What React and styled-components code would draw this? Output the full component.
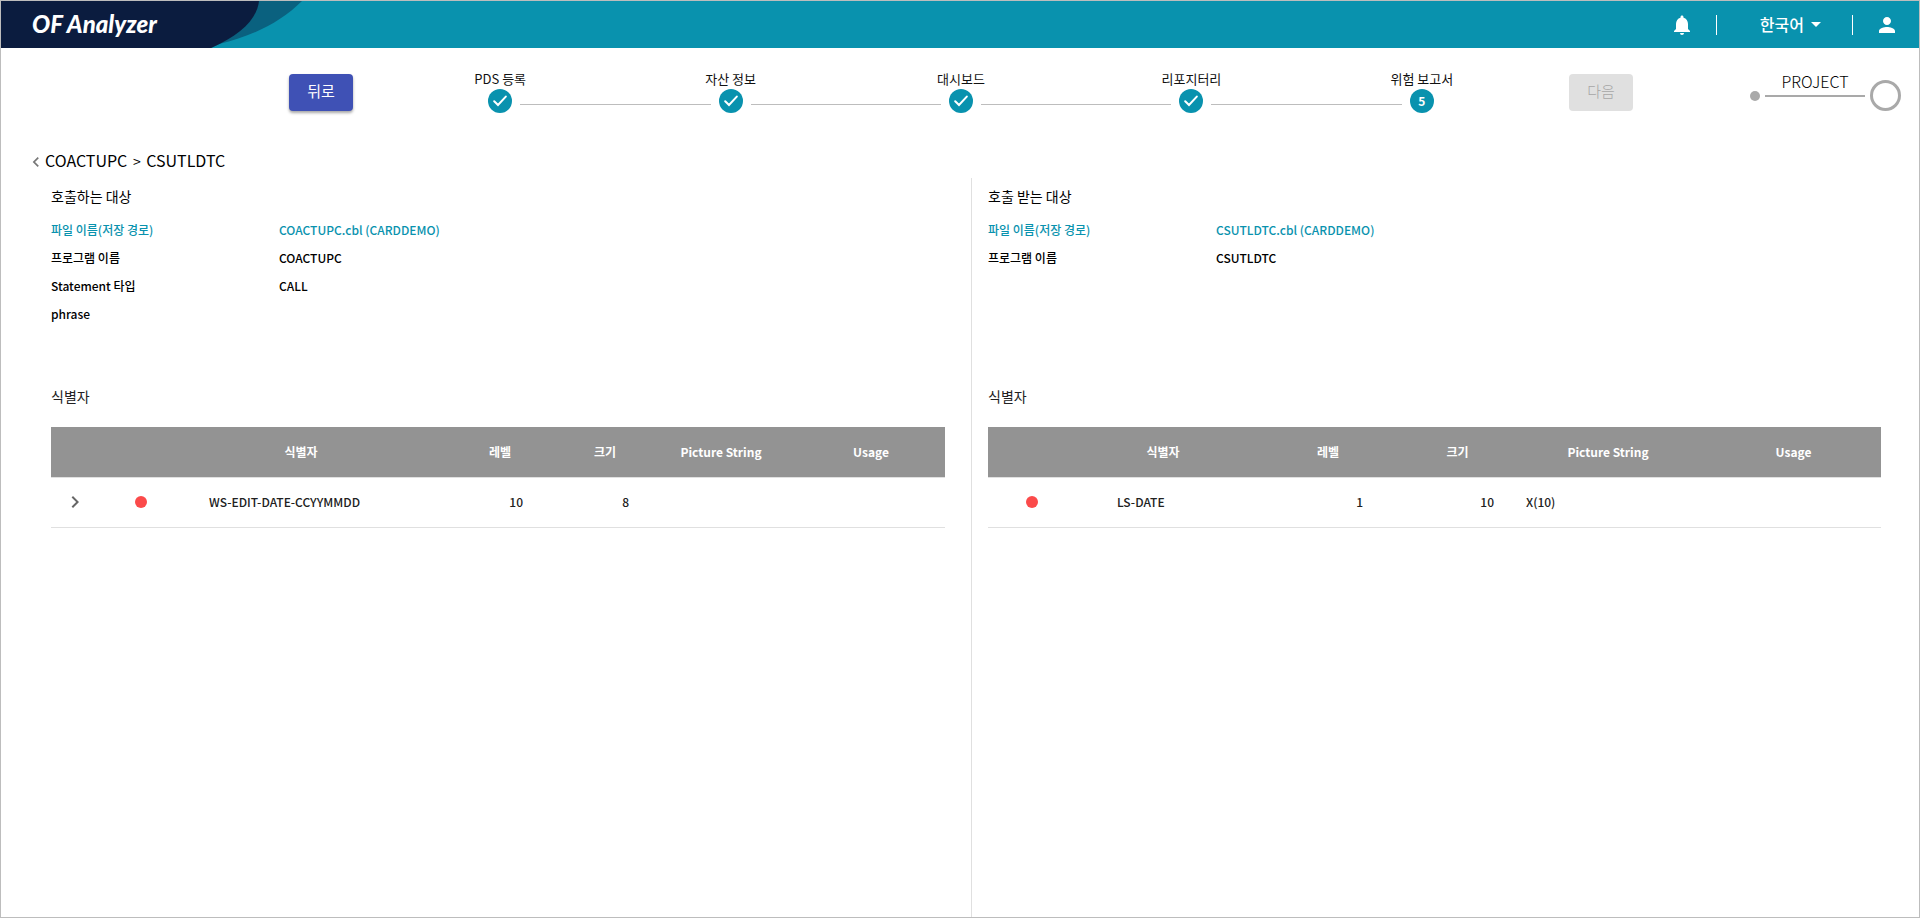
import React from 'react'
import styled, { createGlobalStyle } from 'styled-components'
import {
  MdNotifications,
  MdPerson,
  MdArrowDropDown,
  MdKeyboardArrowLeft,
  MdKeyboardArrowRight,
} from 'react-icons/md'

const colors = {
  teal: '#0992ae',
  tealDark: '#0a617f',
  navy: '#0b1c3f',
  indigo: '#3f51b5',
  line: '#bdbdbd',
  divider: '#e0e0e0',
  head: '#939393',
  gray: '#a9a9a9',
  red: '#fb4a4a',
}

const GlobalStyle = createGlobalStyle`
  * {
    box-sizing: border-box;
  }

  body {
    margin: 0;
    color: #000;
    background: #fff;
    font-family: 'Noto Sans CJK KR', 'Noto Sans', sans-serif;
    font-size: 12px;
    line-height: 18px;
  }

  button {
    font-family: inherit;
  }
`

const Page = styled.div`
  display: flex;
  flex-direction: column;
  min-height: 100vh;
  border: 1px solid ${colors.line};
`

const Header = styled.header`
  display: flex;
  justify-content: space-between;
  height: 47px;
  background: ${colors.teal};
  color: #fff;
`

const Brand = styled.a`
  display: grid;
  align-items: center;
  color: #fff;
  text-decoration: none;

  > * {
    grid-area: 1 / 1;
  }
`

const BrandName = styled.span`
  padding-left: 31px;
  padding-bottom: 2px;
  font-family: Lato, sans-serif;
  font-size: 24px;
  font-style: italic;
  font-weight: 900;
  line-height: 30px;
`

const Tools = styled.div`
  display: flex;
  align-items: center;
  padding-right: 20px;
`

const IconButton = styled.button`
  display: flex;
  padding: 0;
  border: 0;
  background: none;
  color: ${props => props.$color || 'inherit'};
`

const Rule = styled.span`
  width: 1px;
  height: 20px;
  background: #fff;
`

const Language = styled.button`
  display: flex;
  align-items: center;
  padding: 0 24px 2px 43px;
  border: 0;
  background: none;
  color: #fff;
  font-size: 16px;
  font-weight: 500;
  line-height: 24px;
`

const Bell = styled(IconButton)`
  margin-right: 22px;
`

const User = styled(IconButton)`
  margin-left: 22px;
`

const TopBar = styled.nav`
  display: grid;
  grid-template-columns: 384fr 1152fr 382fr;
  align-items: start;
  padding-top: 22px;
  height: 100px;
`

const Side = styled.div`
  display: flex;
  align-items: flex-start;
  justify-content: ${props => (props.$end ? 'flex-end' : 'space-between')};
  padding: ${props => (props.$end ? '4px 32px 0 0' : '4px 18px 0 32px')};
`

const NavButton = styled.button`
  width: 64px;
  height: 37px;
  padding: 0 0 4px;
  border: 0;
  border-radius: 4px;
  background: ${colors.indigo};
  color: #fff;
  font-size: 15px;
  font-weight: 400;
  box-shadow: 0 2px 3px rgba(0, 0, 0, 0.35);

  &:disabled {
    background: #e0e0e0;
    color: #a6a6a6;
    font-weight: 300;
    box-shadow: none;
  }
`

const Steps = styled.ol`
  display: flex;
  margin: 0;
  padding: 0;
  list-style: none;
`

const Step = styled.li`
  flex: 1;
  display: grid;
  grid-template-columns: 1fr 24px 1fr;
  column-gap: 8px;
  justify-items: center;
`

const StepLabel = styled.span`
  grid-column: 1 / -1;
  padding-bottom: 1px;
  color: #111;
  font-size: 13px;
`

const StepMark = styled.span`
  grid-column: 2;
  display: flex;
  align-items: center;
  justify-content: center;
  width: 24px;
  height: 24px;
  border-radius: 50%;
  background: ${colors.teal};
  color: #fff;
  font-weight: 700;
`

const StepLine = styled.span`
  grid-column: ${props => (props.$before ? 1 : 3)};
  grid-row: 2;
  width: 100%;
  height: 1px;
  margin-top: 15px;
  background: ${colors.line};
`

const Project = styled.div`
  display: flex;
  align-items: center;
  gap: 5px;
  height: 37px;
  margin-top: 3px;
`

const ProjectDot = styled.span`
  width: 10px;
  height: 10px;
  border-radius: 50%;
  background: ${colors.gray};
`

const ProjectName = styled.span`
  align-self: start;
  width: 100px;
  height: 20px;
  border-bottom: 2px solid ${colors.gray};
  font-size: 16px;
  font-weight: 300;
  line-height: 8px;
  text-align: center;
`

const ProjectRing = styled.span`
  width: 31px;
  height: 31px;
  border: 3px solid ${colors.gray};
  border-radius: 50%;
`

const Breadcrumb = styled.div`
  display: flex;
  align-items: center;
  height: 30px;
  padding: 0 0 6px 25px;
`

const BackArrow = styled(IconButton)`
  margin-right: -1px;
  padding-top: 4px;
`

const Crumbs = styled.h1`
  margin: 0;
  font-size: 16px;
  font-weight: 400;
  line-height: 24px;

  small {
    margin: 0 2px;
    font-size: 14px;
  }
`

const Panels = styled.main`
  flex: 1;
  display: grid;
  grid-template-columns: 970fr 947fr;
`

const Panel = styled.section`
  padding: 8px ${props => (props.$last ? 38 : 26)}px 0 ${props => (props.$last ? 16 : 50)}px;
  border-left: ${props => (props.$last ? `1px solid ${colors.divider}` : 0)};
`

const PanelTitle = styled.h2`
  margin: 0 0 10px;
  font-size: 14px;
  font-weight: 400;
  line-height: 20px;
`

const Facts = styled.dl`
  display: grid;
  grid-template-columns: 228px 1fr;
  grid-auto-rows: 28px;
  align-items: center;
  height: 170px;
  margin: 0;
  font-weight: 500;
`

const Term = styled.dt`
  color: ${props => (props.$accent ? colors.teal : 'inherit')};
`

const Value = styled.dd`
  margin: 0;
  color: ${props => (props.$accent ? colors.teal : 'inherit')};
`

const TableTitle = styled.h3`
  margin: 0 0 21px;
  color: #222;
  font-size: 14px;
  font-weight: 400;
  line-height: 20px;
`

const Table = styled.table`
  width: 100%;
  table-layout: fixed;
  border-collapse: collapse;
`

const HeadCell = styled.th`
  height: 50px;
  padding: ${props => (props.$numeric ? '0 0 0 26px' : '0 26px 0 0')};
  border-bottom: 1px solid ${colors.divider};
  background: ${colors.head};
  color: #fff;
  font-weight: 700;
  text-align: center;
`

const Cell = styled.td`
  height: 50px;
  padding: 0 16px;
  border-bottom: 1px solid ${colors.divider};
  color: #212121;
  font-weight: 500;
  text-align: ${props => (props.$numeric ? 'right' : 'left')};
`

const ExpandCell = styled(Cell)`
  padding: 0 12px;
`

const StatusCell = styled(Cell)`
  padding: 0 26px 0 0;
`

const Status = styled.span`
  display: block;
  width: 12px;
  height: 12px;
  margin: 0 auto;
  border-radius: 50%;
  background: ${colors.red};
`

const steps = ['PDS 등록', '자산 정보', '대시보드', '리포지터리', '위험 보고서']

const caller = {
  title: '호출하는 대상',
  facts: [
    ['파일 이름(저장 경로)', 'COACTUPC.cbl (CARDDEMO)'],
    ['프로그램 이름', 'COACTUPC'],
    ['Statement 타입', 'CALL'],
    ['phrase', ''],
  ],
  widths: [64, 78, 242, 104, 106, 178, 122],
  expandable: true,
  rows: [{ name: 'WS-EDIT-DATE-CCYYMMDD', level: 10, size: 8, picture: '', usage: '' }],
}

const callee = {
  title: '호출 받는 대상',
  facts: [
    ['파일 이름(저장 경로)', 'CSUTLDTC.cbl (CARDDEMO)'],
    ['프로그램 이름', 'CSUTLDTC'],
  ],
  widths: [113, 150, 128, 131, 222, 149],
  rows: [{ name: 'LS-DATE', level: 1, size: 10, picture: 'X(10)', usage: '' }],
}

const BrandShape = () => (
  <svg width="301" height="47" viewBox="0 0 301 47" aria-hidden="true">
    <path d="M0 0H301C280 21 252 35 218 43L210 47H0Z" fill={colors.tealDark} />
    <path d="M0 0H258C256 18 240 34 210 47H0Z" fill={colors.navy} />
  </svg>
)

const Check = () => (
  <svg width="14" height="12" viewBox="0 0 14 12" fill="none" aria-hidden="true">
    <path d="M1.2 6.2L5 10L12.8 1.6" stroke="#fff" strokeWidth="2" strokeLinecap="round" />
  </svg>
)

const Identifiers = ({ widths, rows, expandable }) => (
  <Table>
    <colgroup>
      {widths.map((width, i) => <col key={i} width={width} />)}
    </colgroup>
    <thead>
      <tr>
        {expandable && <HeadCell />}
        <HeadCell />
        <HeadCell>식별자</HeadCell>
        <HeadCell $numeric>레벨</HeadCell>
        <HeadCell $numeric>크기</HeadCell>
        <HeadCell>Picture String</HeadCell>
        <HeadCell>Usage</HeadCell>
      </tr>
    </thead>
    <tbody>
      {rows.map(row => (
        <tr key={row.name}>
          {expandable && (
            <ExpandCell>
              <IconButton $color="#666" aria-label="펼치기"><MdKeyboardArrowRight size={24} /></IconButton>
            </ExpandCell>
          )}
          <StatusCell><Status /></StatusCell>
          <Cell>{row.name}</Cell>
          <Cell $numeric>{row.level}</Cell>
          <Cell $numeric>{row.size}</Cell>
          <Cell>{row.picture}</Cell>
          <Cell>{row.usage}</Cell>
        </tr>
      ))}
    </tbody>
  </Table>
)

const Target = ({ title, facts, last, ...table }) => (
  <Panel $last={last}>
    <PanelTitle>{title}</PanelTitle>
    <Facts>
      {facts.map(([term, value], i) => (
        <React.Fragment key={term}>
          <Term $accent={i === 0}>{term}</Term>
          <Value $accent={i === 0}>{value}</Value>
        </React.Fragment>
      ))}
    </Facts>
    <TableTitle>식별자</TableTitle>
    <Identifiers {...table} />
  </Panel>
)

export default () => (
  <Page>
    <GlobalStyle />
    <Header>
      <Brand href="#">
        <BrandShape />
        <BrandName>OF Analyzer</BrandName>
      </Brand>
      <Tools>
        <Bell aria-label="알림"><MdNotifications size={24} /></Bell>
        <Rule />
        <Language>한국어 <MdArrowDropDown size={24} /></Language>
        <Rule />
        <User aria-label="사용자"><MdPerson size={24} /></User>
      </Tools>
    </Header>
    <TopBar>
      <Side $end>
        <NavButton>뒤로</NavButton>
      </Side>
      <Steps>
        {steps.map((label, i) => (
          <Step key={label}>
            <StepLabel>{label}</StepLabel>
            {i > 0 && <StepLine $before />}
            <StepMark>{i < steps.length - 1 ? <Check /> : i + 1}</StepMark>
            {i < steps.length - 1 && <StepLine />}
          </Step>
        ))}
      </Steps>
      <Side>
        <NavButton disabled>다음</NavButton>
        <Project>
          <ProjectDot />
          <ProjectName>PROJECT</ProjectName>
          <ProjectRing />
        </Project>
      </Side>
    </TopBar>
    <Breadcrumb>
      <BackArrow $color="#777" aria-label="뒤로"><MdKeyboardArrowLeft size={20} /></BackArrow>
      <Crumbs>COACTUPC <small>&gt;</small> CSUTLDTC</Crumbs>
    </Breadcrumb>
    <Panels>
      <Target {...caller} />
      <Target {...callee} last />
    </Panels>
  </Page>
)
